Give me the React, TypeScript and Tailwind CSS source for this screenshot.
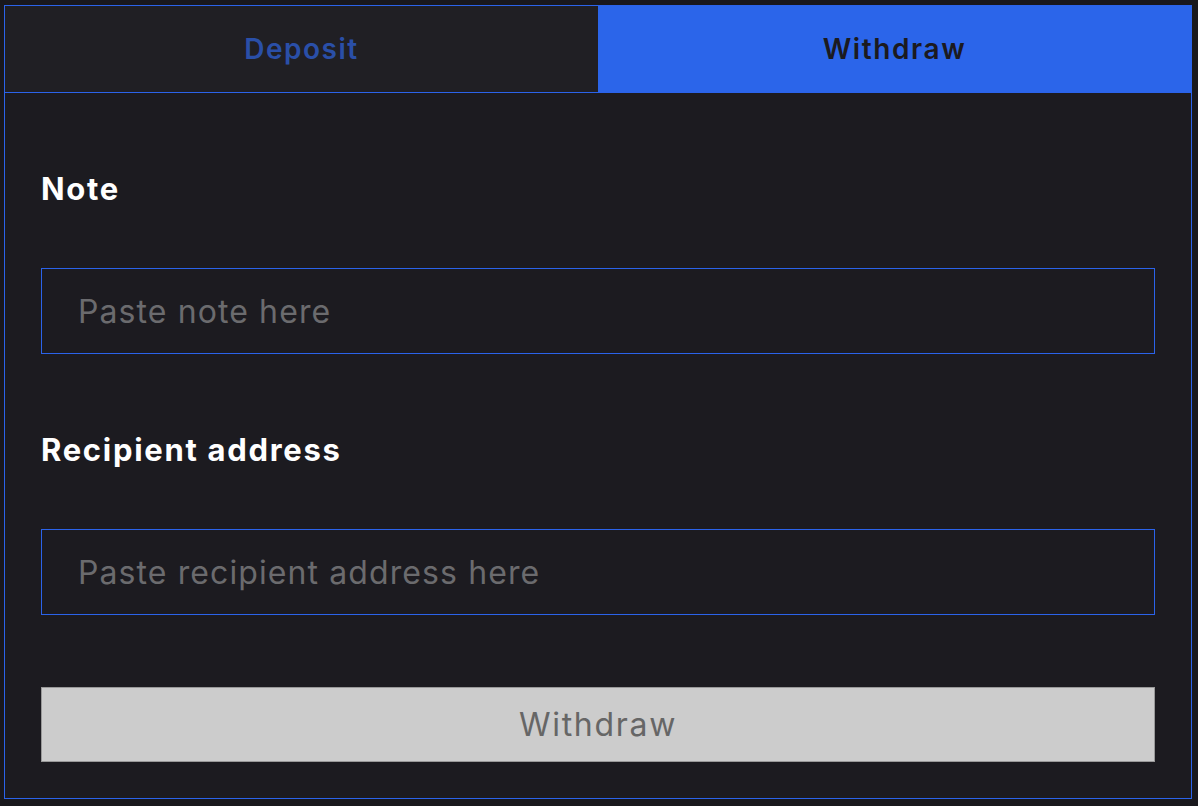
import React, { useState } from 'react';

const font = { fontFamily: 'Inter, "Open Sans", sans-serif' };

export default function App() {
  const [tab, setTab] = useState<'deposit' | 'withdraw'>('withdraw');
  const [note, setNote] = useState('');
  const [recipient, setRecipient] = useState('');

  return (
    <div className="min-h-screen w-full bg-[#19181d] pt-[5px] pl-[4px]" style={font}>
      <div className="w-[1188px] h-[794px] border border-[#2b63ea] bg-[#1c1b20] flex flex-col">
        {/* Tabs */}
        <div className="flex h-[87px] border-b border-[#2b63ea]">
          <button
            onClick={() => setTab('deposit')}
            className="flex-1 flex items-center justify-center pb-[1px] bg-[#201f24] text-[#2a4fa8] text-[28px] font-semibold tracking-[1.5px]"
          >
            Deposit
          </button>
          <button
            onClick={() => setTab('withdraw')}
            className="flex-1 flex items-center justify-center pb-[1px] bg-[#2b65ea] text-[#1b1a20] text-[28px] font-semibold tracking-[1.6px]"
          >
            Withdraw
          </button>
        </div>

        {/* Form */}
        <div className="flex flex-col px-[36px] pt-[75px]">
          <label className="text-white text-[31px] font-bold tracking-[1.7px] leading-[42px]">Note</label>
          <input
            value={note}
            onChange={(e) => setNote(e.target.value)}
            placeholder="Paste note here"
            className="mt-[58px] h-[86px] w-full border border-[#2b63ea] bg-[#1c1b20] px-[36px] text-[32px] tracking-[1.1px] text-white placeholder:text-[#6b6b6e] outline-none"
          />
          <label className="mt-[75px] text-white text-[31px] font-bold tracking-[1.7px] leading-[42px]">
            Recipient address
          </label>
          <input
            value={recipient}
            onChange={(e) => setRecipient(e.target.value)}
            placeholder="Paste recipient address here"
            className="mt-[58px] h-[86px] w-full border border-[#2b63ea] bg-[#1c1b20] px-[36px] text-[32px] tracking-[1.1px] text-white placeholder:text-[#6b6b6e] outline-none"
          />
          <button
            disabled
            className="mt-[72px] h-[75px] w-full border border-[#999999] bg-[#cccccc] text-[32px] tracking-[1.7px] text-[#666666]"
          >
            Withdraw
          </button>
        </div>
      </div>
    </div>
  );
}
